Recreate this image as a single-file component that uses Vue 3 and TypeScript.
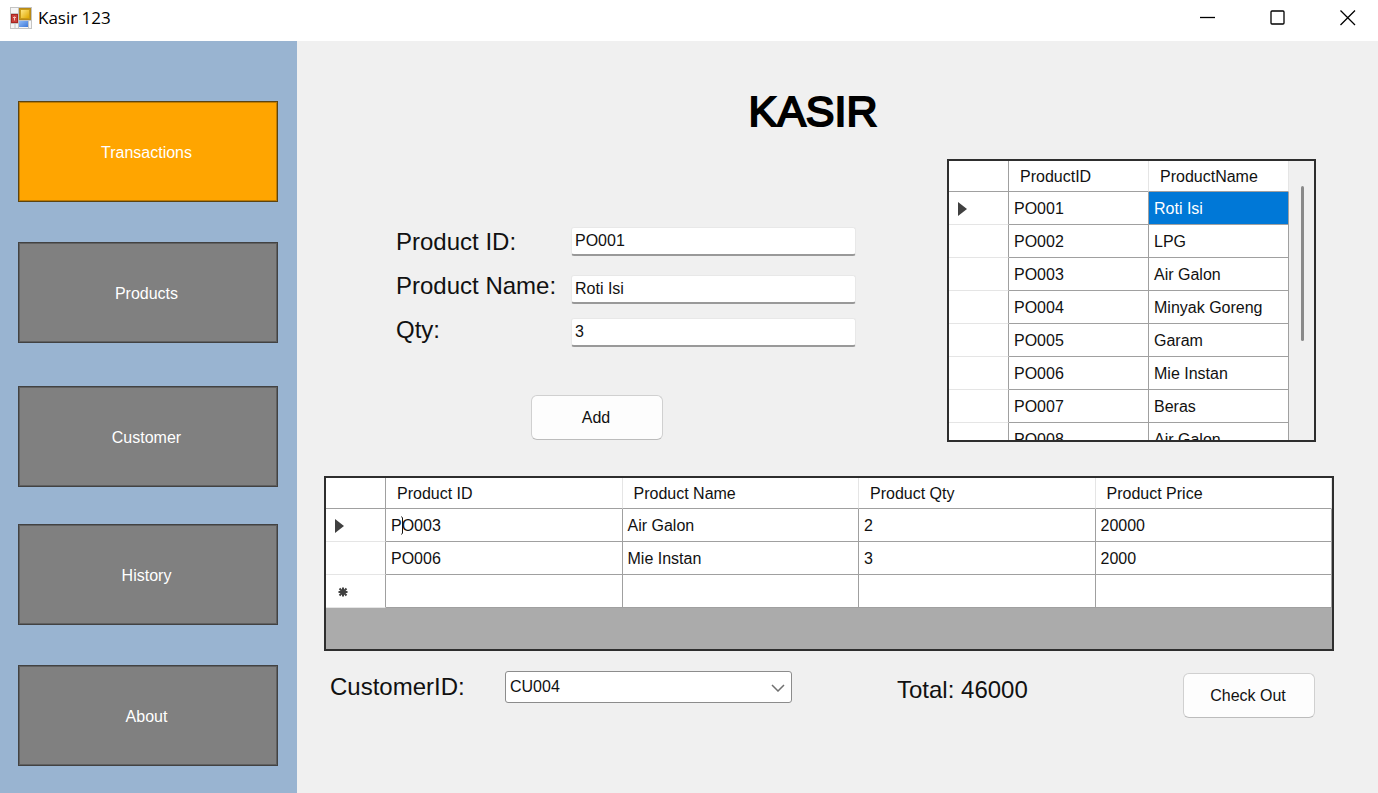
<script setup lang="ts">
import { ref } from 'vue'

interface Product {
  id: string
  name: string
}

interface CartLine extends Product {
  qty: number
  price: number
}

const pages = ['Transactions', 'Products', 'Customer', 'History', 'About']
const activePage = ref('Transactions')

const products: Product[] = [
  { id: 'PO001', name: 'Roti Isi' },
  { id: 'PO002', name: 'LPG' },
  { id: 'PO003', name: 'Air Galon' },
  { id: 'PO004', name: 'Minyak Goreng' },
  { id: 'PO005', name: 'Garam' },
  { id: 'PO006', name: 'Mie Instan' },
  { id: 'PO007', name: 'Beras' },
  { id: 'PO008', name: 'Air Galon' },
]

const cart: CartLine[] = [
  { id: 'PO003', name: 'Air Galon', qty: 2, price: 20000 },
  { id: 'PO006', name: 'Mie Instan', qty: 3, price: 2000 },
]

const productId = ref('PO001')
const productName = ref('Roti Isi')
const qty = ref('3')
const customer = ref('CU004')
const total = cart.reduce((sum, line) => sum + line.qty * line.price, 0)
</script>

<template>
  <div class="window">
    <header class="titlebar">
      <svg class="app-icon" viewBox="0 0 22 22" aria-hidden="true">
        <defs>
          <linearGradient id="gold" x1="0" y1="0" x2="1" y2="1">
            <stop offset="0" stop-color="#ffe680" />
            <stop offset="1" stop-color="#e0a800" />
          </linearGradient>
          <linearGradient id="blue" x1="0" y1="0" x2="1" y2="1">
            <stop offset="0" stop-color="#8fbcf8" />
            <stop offset="1" stop-color="#3f78d8" />
          </linearGradient>
        </defs>
        <rect x="0.5" y="0.5" width="21" height="21" fill="#f6f6f6" stroke="#c4c4c4" />
        <path d="M8.500 1V21M1 6.500H9M1 16.500H9M5 17V21M18.500 13V21M9 13.500H21" stroke="#c4c4c4" fill="none" />
        <rect x="9.500" y="1.500" width="11" height="11" fill="#c89a18" stroke="#b88a18" />
        <rect x="11" y="3" width="8" height="8" fill="url(#gold)" />
        <rect x="1.500" y="7.500" width="6" height="8" fill="#c8403a" stroke="#a82420" />
        <path d="M3 10.500H6M4.500 9.500V13.500" stroke="#f4c0b8" fill="none" />
        <rect x="9" y="14" width="9" height="6" fill="url(#blue)" />
      </svg>
      <span class="caption">Kasir 123</span>
      <div class="controls">
        <button type="button" aria-label="Minimize">
          <svg viewBox="0 0 16 16"><path d="M0 7.500H15" /></svg>
        </button>
        <button type="button" aria-label="Maximize">
          <svg viewBox="0 0 16 16"><rect x="1" y="1" width="13" height="13" rx="1" /></svg>
        </button>
        <button type="button" aria-label="Close">
          <svg viewBox="0 0 16 16"><path d="M0.500 0.500L15 15M15 0.500L0.500 15" /></svg>
        </button>
      </div>
    </header>

    <div class="body">
      <nav class="sidebar">
        <button
          v-for="page in pages"
          :key="page"
          type="button"
          :class="{ active: page === activePage }"
          @click="activePage = page"
        >
          {{ page }}
        </button>
      </nav>

      <main class="content">
        <h1>KASIR</h1>

        <section class="top">
          <form class="entry" @submit.prevent>
            <div class="fields">
              <div class="labels">
                <label for="pid">Product ID:</label>
                <label for="pname">Product Name:</label>
                <label for="qty">Qty:</label>
              </div>
              <div class="inputs">
                <input id="pid" v-model="productId" type="text" />
                <input id="pname" v-model="productName" type="text" />
                <input id="qty" v-model="qty" type="text" />
              </div>
            </div>
            <button class="btn add" type="submit">Add</button>
          </form>

          <div class="grid-box catalog">
            <table>
              <colgroup>
                <col class="marker" />
                <col />
                <col />
              </colgroup>
              <thead>
                <tr>
                  <th></th>
                  <th>ProductID</th>
                  <th>ProductName</th>
                </tr>
              </thead>
              <tbody>
                <tr v-for="(p, i) in products" :key="p.id">
                  <th scope="row">
                    <svg v-if="i === 0" class="arrow" viewBox="0 0 9 14"><path d="M0 0L9 7L0 14Z" /></svg>
                  </th>
                  <td>{{ p.id }}</td>
                  <td :class="{ selected: i === 0 }">{{ p.name }}</td>
                </tr>
              </tbody>
            </table>
            <div class="scroll"><div class="thumb"></div></div>
          </div>
        </section>

        <div class="grid-box cart">
          <table>
            <colgroup>
              <col class="marker" />
              <col />
              <col />
              <col />
              <col />
            </colgroup>
            <thead>
              <tr>
                <th></th>
                <th>Product ID</th>
                <th>Product Name</th>
                <th>Product Qty</th>
                <th>Product Price</th>
              </tr>
            </thead>
            <tbody>
              <tr v-for="(line, i) in cart" :key="line.id">
                <th scope="row">
                  <svg v-if="i === 0" class="arrow" viewBox="0 0 9 14"><path d="M0 0L9 7L0 14Z" /></svg>
                </th>
                <td>
                  {{ line.id }}
                  <svg v-if="i === 0" class="ibeam" viewBox="0 0 5 19">
                    <path d="M1.500 0.500L2.500 2V17L1.500 18.500" />
                  </svg>
                </td>
                <td>{{ line.name }}</td>
                <td>{{ line.qty }}</td>
                <td>{{ line.price }}</td>
              </tr>
              <tr>
                <th scope="row">
                  <svg class="star" viewBox="0 0 10 10">
                    <path d="M5 0.500V9.500M0.500 5H9.500M1.500 1.500L8.500 8.500M8.500 1.500L1.500 8.500" />
                  </svg>
                </th>
                <td></td>
                <td></td>
                <td></td>
                <td></td>
              </tr>
            </tbody>
          </table>
        </div>

        <section class="checkout">
          <label for="customer">CustomerID:</label>
          <div class="combo">
            <select id="customer" v-model="customer">
              <option>CU004</option>
            </select>
            <svg viewBox="0 0 14 8" aria-hidden="true"><path d="M1 1L7 7L13 1" /></svg>
          </div>
          <p class="total">Total: {{ total }}</p>
          <button class="btn" type="button">Check Out</button>
        </section>
      </main>
    </div>
  </div>
</template>

<style>
body {
  margin: 0;
}
</style>

<style scoped>
.window,
.window button,
.window input,
.window select {
  font-family: "Liberation Sans", Arial, sans-serif;
  font-size: 16px;
  color: #111;
}

.window {
  display: flex;
  flex-direction: column;
  min-height: 100vh;
  background: #f0f0f0;
}

.window * {
  box-sizing: border-box;
}

.titlebar {
  display: flex;
  align-items: center;
  height: 41px;
  padding-left: 10px;
  padding-bottom: 6px;
  background: #fff;
}

.app-icon {
  width: 22px;
  height: 22px;
}

.caption {
  margin-left: 6px;
  font-family: "Open Sans", "Noto Sans", sans-serif;
  font-size: 17px;
  line-height: 24px;
  color: #000;
}

.controls {
  display: flex;
  gap: 10px;
  margin-left: auto;
}

.controls button {
  display: flex;
  align-items: center;
  justify-content: center;
  width: 60px;
  height: 34px;
  padding: 0;
  border: 0;
  background: none;
}

.controls svg {
  width: 16px;
  height: 16px;
  fill: none;
  stroke: #000;
  stroke-width: 1.3;
}

.body {
  display: flex;
  flex: 1;
}

.sidebar {
  display: grid;
  grid-template-rows: 141px 144px 138px 141px 101px;
  align-content: start;
  flex: none;
  width: 297px;
  padding: 60px 19px 27px 18px;
  background: #99b4d1;
}

.window .sidebar button {
  height: 101px;
  padding: 2px 3px 0 0;
  border: 1px solid #424242;
  background: #808080;
  box-shadow: inset 0 0 0 1px rgba(0, 0, 0, 0.25);
  color: #fff;
}

.window .sidebar button.active {
  border-color: #5c4410;
  background: #ffa500;
}

.content {
  flex: 1;
  min-width: 0;
  padding: 46px 44px 30px 27px;
}

h1 {
  margin: 0 0 24px;
  padding-right: 32px;
  font-size: 43px;
  font-weight: 400;
  line-height: 48px;
  text-align: center;
  color: #000;
  -webkit-text-stroke: 2px #000;
}

.top {
  display: flex;
  margin-bottom: 34px;
  padding-right: 18px;
}

.entry {
  flex: 1;
  padding: 61px 91px 0 72px;
}

.fields {
  display: flex;
}

.labels {
  display: flex;
  flex-direction: column;
  flex: none;
  width: 175px;
}

.labels label {
  font-size: 24px;
  line-height: 44px;
}

.inputs {
  display: grid;
  grid-template-rows: 48px 43px 29px;
  flex: 1;
  padding-top: 7px;
}

.inputs input {
  width: 100%;
  height: 29px;
  padding: 0 3px 1px;
  border: 1px solid #e8e8e8;
  border-bottom: 2px solid #999;
  border-radius: 3px;
  background: #fff;
}

.btn {
  width: 132px;
  height: 45px;
  padding: 0 2px 0 0;
  border: 1px solid #d0d0d0;
  border-bottom-color: #bcbcbc;
  border-radius: 6px;
  background: #fdfdfd;
}

.add {
  display: block;
  margin: 43px 0 0 135px;
}

.grid-box {
  border: 2px solid #2e2e2e;
  overflow: hidden;
}

.catalog {
  display: flex;
  flex: none;
  width: 369px;
  height: 283px;
}

.cart {
  height: 175px;
  margin-bottom: 20px;
  background: #ababab;
}

table {
  flex: 1;
  align-self: flex-start;
  width: 100%;
  border-collapse: separate;
  border-spacing: 0;
  table-layout: fixed;
  background: #fff;
}

.marker {
  width: 60px;
}

th,
td {
  height: 33px;
  padding: 2px 0 0 5px;
  border-right: 1px solid #a0a0a0;
  border-bottom: 1px solid #a0a0a0;
  font-weight: 400;
  line-height: 20px;
  text-align: left;
  white-space: nowrap;
}

td {
  position: relative;
}

thead th {
  height: 31px;
  padding-left: 11px;
  border-right-color: #e5e5e5;
}

thead th:first-child {
  border-right-color: #a0a0a0;
}

tbody th {
  padding-left: 9px;
  border-bottom-color: #e5e5e5;
}

.selected {
  background: #0078d7;
  color: #fff;
}

.arrow {
  display: block;
  width: 9px;
  height: 14px;
  fill: #404040;
}

.star {
  display: block;
  width: 10px;
  height: 10px;
  margin-left: 3px;
  stroke: #404040;
  stroke-width: 2;
}

.ibeam {
  position: absolute;
  top: 7px;
  left: 14px;
  width: 5px;
  height: 19px;
  fill: none;
  stroke: #111;
}

.scroll {
  flex: none;
  width: 25px;
  padding: 25px 0 0 12px;
}

.thumb {
  width: 3px;
  height: 155px;
  border-radius: 2px;
  background: #8a8a8a;
}

.checkout {
  display: flex;
  align-items: flex-start;
  padding: 0 19px 0 6px;
}

.checkout label {
  width: 175px;
  font-size: 24px;
  line-height: 32px;
}

.combo {
  position: relative;
  width: 287px;
}

.combo select {
  display: block;
  width: 100%;
  height: 32px;
  padding: 0 24px 2px 4px;
  border: 1px solid #8c8c8c;
  border-radius: 3px;
  background: #fff;
  appearance: none;
}

.combo svg {
  position: absolute;
  top: 13px;
  right: 7px;
  width: 14px;
  height: 8px;
  fill: none;
  stroke: #707070;
  stroke-width: 1.5;
  pointer-events: none;
}

.total {
  margin: 0 auto 0 105px;
  font-size: 24px;
  line-height: 38px;
}

.checkout .btn {
  margin-top: 2px;
}
</style>
